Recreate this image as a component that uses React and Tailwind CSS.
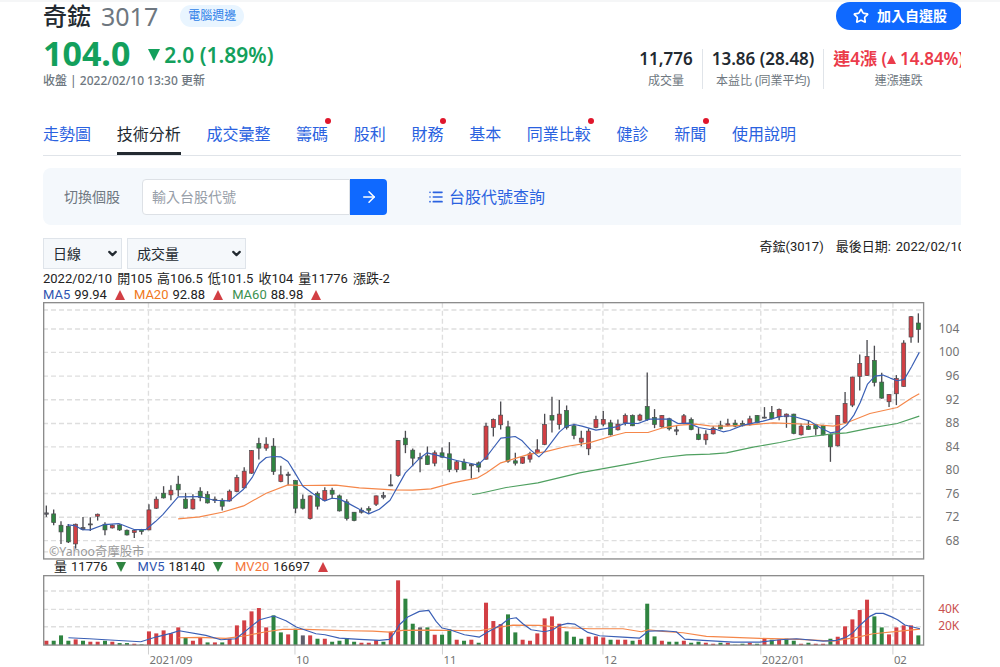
import React from 'react';
import { ArrowRight, ChevronDown, List, Star } from 'lucide-react';

const RED = '#d23f44';
const GREEN = '#2f8440';
const DARK = '#5f5f6b';
const BLUE = '#3a5fb5';
const ORANGE = '#f5874a';

const COLORS = { r: RED, g: GREEN, n: DARK };

const tabs = [
  { label: '走勢圖' },
  { label: '技術分析', active: true },
  { label: '成交彙整' },
  { label: '籌碼', dot: true },
  { label: '股利' },
  { label: '財務', dot: true },
  { label: '基本' },
  { label: '同業比較', dot: true },
  { label: '健診' },
  { label: '新聞', dot: true },
  { label: '使用說明' }
];

const quote = ['2022/02/10', '開105', '高106.5', '低101.5', '收104', '量11776', '漲跌-2'];

// Each candle: high, body top, body bottom, low, colour
const candles = `
616,638,642,650,n 628,641,667,675,g 663,675,695,731,g 671,678,725,728,g 670,672,731,745,r
650,682,688,690,n 651,671,674,692,n 640,642,648,661,r 666,672,689,705,g 673,675,683,685,r
672,674,689,692,g 688,690,704,706,g 687,691,697,713,r 686,688,694,703,g 612,629,689,690,r
589,597,624,626,r 558,579,593,595,g 555,570,584,600,r 527,552,569,588,g 578,597,624,626,g
582,597,626,628,r 561,573,592,603,g 573,583,608,610,g 589,597,601,608,n 594,600,618,631,g
568,573,602,604,r 524,532,574,576,r 501,513,563,565,r 450,451,519,521,r 413,430,444,478,g
411,432,444,452,r 414,438,514,524,g 497,524,544,546,r 515,522,526,555,n 540,541,624,639,g
583,597,624,628,g 585,587,655,658,r 574,580,618,628,g 561,571,601,603,r 563,570,582,594,g
583,587,632,634,g 597,605,655,661,g 635,636,661,663,g 622,630,636,640,n 618,625,630,639,g
586,587,612,617,r 575,586,591,597,n 522,554,557,558,n 420,421,526,530,r 392,414,434,459,g
445,450,474,498,g 458,472,476,516,n 439,467,493,494,g 451,458,489,498,r 442,458,471,473,g
426,461,508,516,g 480,485,508,516,r 476,486,508,509,g 491,493,497,535,n 484,488,501,516,g
368,378,477,479,r 355,358,382,409,r 304,345,374,388,r 362,380,483,488,g 458,482,489,496,g
470,471,489,491,r 455,461,477,487,r 417,449,458,460,r 341,373,433,435,r 290,346,360,397,g
300,342,373,388,r 316,331,382,388,g 371,377,406,417,g 392,414,426,438,r 385,393,446,465,r
347,358,382,384,r 333,358,372,378,r 359,368,404,406,g 358,372,389,391,r 340,346,368,376,r
343,346,377,378,g 341,345,360,363,r 217,319,358,362,g 327,352,373,384,g 345,346,380,383,r
353,356,386,391,g 378,389,393,405,n 342,347,370,372,r 352,358,388,390,g 384,402,418,420,g
390,402,419,434,r 378,384,401,403,r 362,375,386,388,g 356,371,375,378,r 359,369,378,381,g
361,370,377,379,g 347,356,374,376,r 345,346,368,369,g 321,351,354,355,n 318,337,356,358,g
325,328,350,360,r 340,342,350,383,r 341,342,400,402,g 370,378,404,406,r 361,378,388,389,g
372,374,386,405,g 374,376,404,406,g 400,403,440,485,g 345,346,437,439,r 276,310,367,369,r
230,231,315,321,r 163,190,229,271,r 120,169,226,228,r 137,181,247,259,g 218,246,294,296,g
282,283,305,321,r 225,235,281,315,r 121,129,259,260,r 48,50,111,128,r 40,69,88,128,g
`.trim().split(/\s+/).map((row) => row.split(','));

// Each volume bar: top edge followed by its colour
const volumes = `
253r 253g 237g 253g 249r 253g 256r 256r 253g 256r 260g 260g 262r 264g 225r 231r 222r 231r 213r 244g
253r 244r 258g 258r 258g 247r 207r 192r 165r 155r 213r 177g 228g 234r 217g 237n 237r 247g 247r 256g
253g 245g 256g 259r 259r 251r 256g 226r 72r 127g 202g 213n 213g 235r 235g 219g 250r 253g 250r 259g
139r 194r 203r 174g 228g 250r 253r 231r 186r 180r 202r 225g 241g 247g 241r 240r 243r 250g 250r 250r
253g 250r 142g 240g 253r 256g 256g 253r 259g 256g 259r 262r 259g 259r 265g 262g 259r 262g 247r 250g
250r 247g 253g 262r 259g 262r 262r 247g 241r 210r 189r 161r 130r 180g 213g 234r 213r 207r 207r 237g
`.trim().split(/\s+/).map((v) => ({ top: parseInt(v, 10), color: COLORS[v.slice(-1)] }));

const ma5 = '74,674 95,676 117,688 141,689 184,673 227,670 273,688 308,688 337,664 359,643 405,590 469,589 513,600 559,602 601,567 628,530 648,490 669,472 691,469 712,470 734,484 755,518 779,558 808,580 844,602 866,594 887,596 918,611 948,627 976,641 1008,627 1040,600 1086,518 1129,474 1151,458 1188,467 1240,481 1283,490 1303,495 1329,470 1348,445 1372,414 1415,409 1436,422 1461,449 1486,470 1504,453 1547,396 1568,378 1593,373 1615,378 1657,390 1718,380 1746,369 1783,370 1818,357 1879,357 1903,370 1935,369 1965,382 1998,388 2018,388 2038,395 2058,391 2098,375 2158,363 2207,350 2230,347 2253,350 2298,363 2328,382 2360,398 2383,394 2408,375 2430,345 2449,307 2471,252 2493,228 2517,225 2539,234 2560,242 2581,238 2603,200 2626,157';
const ma20 = '405,656 469,650 537,636 601,617 669,579 734,554 778,556 878,555 948,563 1048,569 1108,570 1163,566 1228,548 1303,533 1329,518 1372,488 1418,474 1458,462 1504,455 1568,439 1636,428 1708,407 1746,397 1813,397 1858,383 1908,375 1958,372 1998,377 2048,378 2118,374 2188,368 2308,373 2368,378 2403,370 2478,340 2560,322 2603,294 2626,281';
const ma60 = '1286,583 1308,580 1388,562 1483,548 1608,518 1758,491 1858,472 1928,464 1998,462 2048,458 2128,441 2208,427 2278,412 2360,402 2408,398 2478,384 2560,370 2626,348';
const mv5 = '76,244 138,247 188,250 293,256 338,242 383,231 408,223 488,237 533,250 578,247 628,207 649,190 692,179 728,193 759,212 818,232 845,235 888,245 948,249 1008,252 1038,249 1053,230 1068,205 1093,182 1128,165 1156,162 1178,195 1196,215 1219,220 1263,235 1308,242 1330,228 1373,205 1395,188 1418,184 1438,202 1463,220 1503,226 1528,220 1548,207 1573,201 1593,203 1633,228 1668,238 1738,242 1788,245 1815,224 1858,223 1898,226 1923,248 1978,252 2068,257 2148,257 2208,250 2258,247 2338,254 2378,252 2408,242 2428,228 2450,205 2478,180 2496,171 2518,171 2540,180 2561,190 2583,206 2628,217';
const mv20 = '406,244 468,243 548,246 608,238 668,226 718,219 788,219 918,223 988,224 1038,227 1078,222 1148,221 1308,223 1368,212 1408,206 1488,207 1568,214 1638,217 1738,217 1793,226 1815,220 1858,225 1918,229 1988,240 2148,246 2268,249 2368,254 2438,243 2488,232 2568,224 2628,218';

const priceTicks = [
  [104, 87], [100, 157], [96, 228], [92, 299], [88, 370], [84, 440],
  [80, 510], [76, 580], [72, 651], [68, 721]
];

const months = [
  ['2021/09', 316], ['10', 755], ['11', 1197], ['12', 1678], ['2022/01', 2151], ['02', 2547]
];

const candleX = (i) => 10 + i * 21.96;

const GridLine = (props) => (
  <line {...props} stroke="#dedede" strokeWidth="4" strokeDasharray="15 9" />
);

const Curve = ({ points, color }) => (
  <polyline points={points} fill="none" stroke={color} strokeWidth="3.5" strokeLinejoin="round" />
);

/**
 * Candlestick chart with the moving averages
 */
const PriceChart = () => (
  <svg viewBox="0 6 2751 772" className="block w-full" role="img" aria-label="K線圖">
    {[30, 755, ...priceTicks.map((t) => t[1])].map((y) => (
      <GridLine key={y} x1="0" x2="2638" y1={y} y2={y} />
    ))}
    {months.map(([label, x]) => (
      <GridLine key={label} x1={x} x2={x} y1="8" y2="776" />
    ))}
    <text x="18" y="766" fontSize="37" fill="#9a9a9a" className="font-['Noto_Sans','Noto_Sans_CJK_TC',sans-serif]">
      ©Yahoo奇摩股市
    </text>
    {candles.map(([high, top, bottom, low, color], i) => (
      <g key={i} stroke="#4b4b50">
        <line x1={candleX(i)} x2={candleX(i)} y1={high} y2={low} strokeWidth="4" />
        <rect
          x={candleX(i) - 6}
          y={top}
          width="12"
          height={bottom - top}
          fill={COLORS[color]}
          strokeWidth="2"
        />
      </g>
    ))}
    <Curve points={ma60} color="#4fa060" />
    <Curve points={ma20} color={ORANGE} />
    <Curve points={ma5} color={BLUE} />
    <rect x="2" y="8" width="2637" height="768" fill="none" stroke="#8c8c8c" strokeWidth="4" />
    {priceTicks.map(([price, y]) => (
      <text
        key={price}
        x="2746"
        y={y + 12}
        textAnchor="end"
        fontSize="36"
        fill="#737373"
        className="font-['Noto_Sans',sans-serif]"
      >
        {price}
      </text>
    ))}
  </svg>
);

/**
 * Volume bars with the month axis
 */
const VolumeChart = () => (
  <svg viewBox="0 56 2751 276" className="block w-full" role="img" aria-label="成交量圖">
    {[104, 159, 211].map((y) => (
      <GridLine key={y} x1="0" x2="2638" y1={y} y2={y} />
    ))}
    {months.map(([label, x]) => (
      <g key={label}>
        <GridLine x1={x} x2={x} y1="58" y2="266" />
        <line x1={x} x2={x} y1="266" y2="294" stroke="#cfcfcf" strokeWidth="3" />
        <text x={x + 3} y="324" fontSize="34" fill="#737373" className="font-['Noto_Sans',sans-serif]">
          {label}
        </text>
      </g>
    ))}
    {volumes.map(({ top, color }, i) => (
      <rect key={i} x={candleX(i) - 6} y={top} width="12" height={266 - top} fill={color} />
    ))}
    <Curve points={mv20} color={ORANGE} />
    <Curve points={mv5} color={BLUE} />
    <rect x="2" y="58" width="2637" height="208" fill="none" stroke="#8c8c8c" strokeWidth="4" />
    {[['40K', 169], ['20K', 221]].map(([label, y]) => (
      <text
        key={label}
        x="2746"
        y={y}
        textAnchor="end"
        fontSize="36"
        fill="#c9504f"
        className="font-['Noto_Sans',sans-serif]"
      >
        {label}
      </text>
    ))}
  </svg>
);

const Triangle = ({ up, color, className }) => (
  <svg viewBox="0 0 10 10" className={className} aria-hidden="true">
    <path d={up ? 'M5 0L10 10H0z' : 'M0 0H10L5 10z'} fill={color} />
  </svg>
);

const Legend = ({ name, nameClass, value, up }) => (
  <span className="flex items-center gap-1">
    <span className={nameClass}>{name}</span>
    <span>{value}</span>
    <Triangle up={up} color={up ? RED : GREEN} className="ml-1 size-[10px]" />
  </span>
);

const Stat = ({ label, className, children }) => (
  <div className={`px-[9px] text-center ${className}`}>
    <div className="mb-1 flex h-5 items-center justify-center gap-1 text-[17px] leading-5 font-semibold whitespace-nowrap">
      {children}
    </div>
    <div className="text-xs leading-4 whitespace-nowrap text-[#6e7780]">{label}</div>
  </div>
);

const ChartSelect = ({ label, options, className }) => (
  <div className={`relative ${className}`}>
    <select
      aria-label={label}
      className="h-[31px] w-full appearance-none border border-[#dfe4ea] bg-[#f5f8fb] pl-[9px] text-sm text-[#232a31]"
    >
      {options.map((o) => (
        <option key={o}>{o}</option>
      ))}
    </select>
    <ChevronDown
      className="pointer-events-none absolute top-[9px] right-[3px] size-[13px] text-[#232a31]"
      strokeWidth={4}
    />
  </div>
);

const App = () => {
  return (
    <div className="overflow-hidden border-t-2 border-[#f5f6f7] bg-white pr-[39px] pl-[43px] font-['Noto_Sans','Noto_Sans_CJK_TC',sans-serif] text-[#232a31]">
      <div className="overflow-x-clip">
        {/* Name */}
        <div className="flex h-7 items-center">
          <h1 className="flex items-center gap-2.5 text-2xl leading-7">
            <span className="font-medium">奇鋐</span>
            <span className="text-[25px] text-[#6e7780]">3017</span>
          </h1>
          <a href="#sector" className="ml-[22px] rounded-full bg-[#e9f5ff] px-2 text-xs leading-[22px] text-[#2f7fe8]">
            電腦週邊
          </a>
          <button className="-mr-0.5 ml-auto flex h-7 items-center gap-2 rounded-full bg-[#0f69ff] pr-4 pl-[17px] text-sm font-bold text-white">
            <Star className="size-4" strokeWidth={2.5} />
            加入自選股
          </button>
        </div>

        {/* Price and stats */}
        <div className="mt-1 flex items-end justify-between">
          <div>
            <div className="flex h-[38px] items-center font-bold text-[#13a05c]">
              <span className="text-[34px] leading-[38px]">104.0</span>
              <span className="mt-1 ml-[18px] flex items-center gap-1 text-[21px] leading-7 font-semibold">
                <Triangle color="#13a05c" className="size-3" />
                2.0 (1.89%)
              </span>
            </div>
            <p className="mt-px text-xs leading-4 font-medium text-[#6e7780]">收盤 | 2022/02/10 13:30 更新</p>
          </div>
          <div className="-mr-3 flex divide-x divide-[#e0e4e9]">
            <Stat label="成交量">11,776</Stat>
            <Stat label="本益比 (同業平均)">13.86 (28.48)</Stat>
            <Stat label="連漲連跌" className="text-[#eb3b4b]">
              <span>連4漲 (</span>
              <Triangle up color="#eb3b4b" className="-ml-1 size-[9px]" />
              <span>14.84%)</span>
            </Stat>
          </div>
        </div>

        {/* Tabs */}
        <nav className="mt-[29px] border-b border-[#e0e4e9]">
          <div className="flex w-[753px] max-w-full justify-between text-base">
            {tabs.map(({ label, active, dot }) => (
              <a
                key={label}
                href="#tab"
                className={
                  active
                    ? 'relative border-b-[3px] border-[#232a31] pb-0.5 leading-8 whitespace-nowrap'
                    : 'relative border-b-[3px] border-transparent pb-0.5 leading-8 whitespace-nowrap text-[#2a62e0]'
                }
              >
                {label}
                {dot && <span className="absolute top-0 -right-[3px] size-1.5 rounded-full bg-[#e0162b]" />}
              </a>
            ))}
          </div>
        </nav>

        {/* Search */}
        <form className="mt-3 flex h-[57px] items-center rounded-l-lg bg-[#f4f8fc] pl-[21px]">
          <label htmlFor="symbol" className="text-sm text-[#6e7780]">切換個股</label>
          <input
            id="symbol"
            type="text"
            placeholder="輸入台股代號"
            className="ml-[22px] h-9 w-[208px] rounded-l border border-[#dde1e6] bg-white px-[9px] text-sm placeholder:text-[#979ea8]"
          />
          <button
            type="button"
            aria-label="查詢"
            className="flex h-9 w-[37px] items-center justify-center rounded-r bg-[#0f69ff] text-white"
          >
            <ArrowRight className="size-[18px]" />
          </button>
          <a href="#list" className="ml-[41px] flex items-center gap-[5px] text-base text-[#2a62e0]">
            <List className="size-4" strokeWidth={2.5} />
            台股代號查詢
          </a>
        </form>

        <div className="font-['Roboto','Noto_Sans_CJK_TC',sans-serif] text-[13px] text-[#222]">
          <div className="mt-[13px] flex justify-between">
            <div className="flex gap-[5px]">
              <ChartSelect label="週期" options={['日線', '週線', '月線']} className="w-[79px]" />
              <ChartSelect label="指標" options={['成交量', 'KD', 'MACD']} className="w-[119px]" />
            </div>
            <p className="-mr-1 flex gap-3 leading-[18px] whitespace-nowrap">
              <span>奇鋐(3017)</span>
              <span className="flex gap-[5px]">
                <span>最後日期:</span>
                <span>2022/02/10</span>
              </span>
            </p>
          </div>

          <p className="mt-0.5 flex gap-[5px] leading-4">
            {quote.map((q) => (
              <span key={q}>{q}</span>
            ))}
          </p>
          <div className="flex h-[15px] items-center gap-[9px]">
            <Legend name="MA5" nameClass="text-[#2f55b0]" value="99.94" up />
            <Legend name="MA20" nameClass="text-[#f07820]" value="92.88" up />
            <Legend name="MA60" nameClass="text-[#3b9150]" value="88.98" up />
          </div>
          <PriceChart />
          <div className="flex h-[15px] items-center gap-3 pl-[11px]">
            <Legend name="量" value="11776" />
            <Legend name="MV5" nameClass="text-[#2f55b0]" value="18140" />
            <Legend name="MV20" nameClass="text-[#f5763a]" value="16697" up />
          </div>
          <VolumeChart />
        </div>
      </div>
    </div>
  );
};

export default App;
